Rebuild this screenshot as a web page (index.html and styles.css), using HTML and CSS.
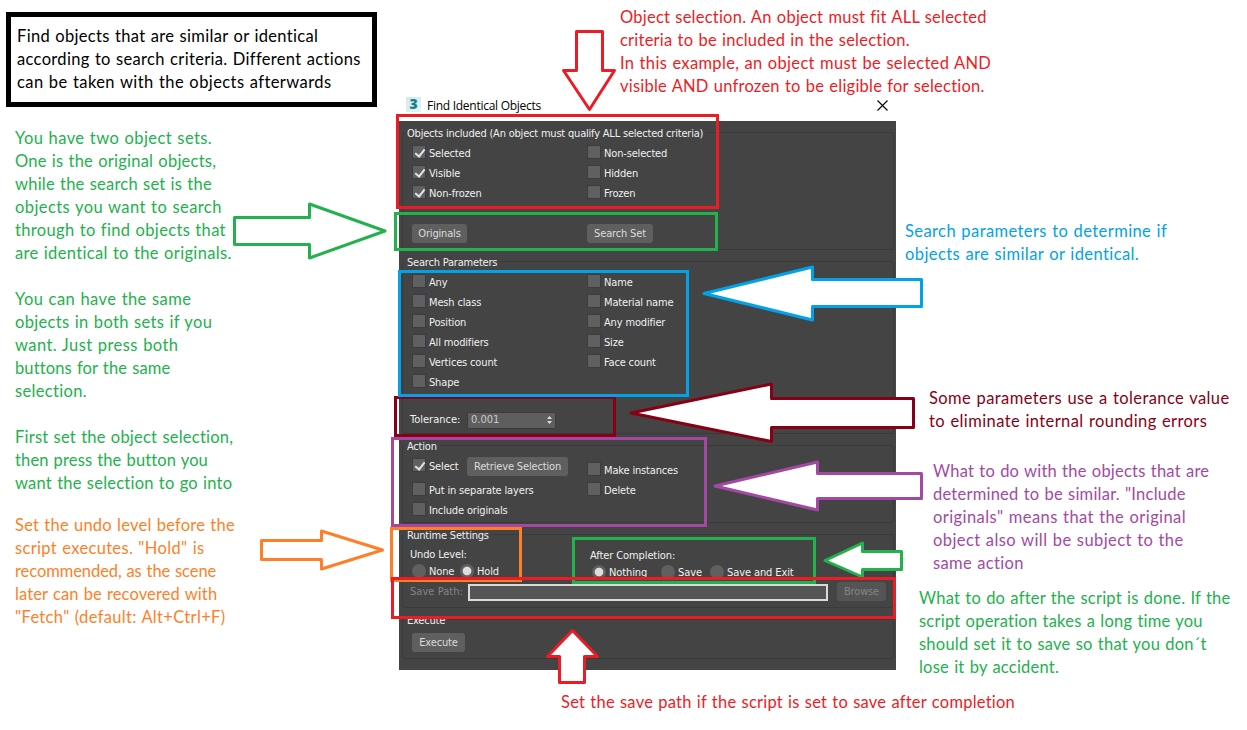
FILE: index.html
```html
<!DOCTYPE html>
<html lang="en">
<head>
<meta charset="utf-8">
<title>Find Identical Objects</title>
<link rel="stylesheet" href="styles.css">
</head>
<body>
<main class="sheet">

  <section class="dialog">
    <header class="titlebar">
      <span class="app-icon">3</span>
      <span class="caption">Find Identical Objects</span>
      <svg class="close" width="11" height="11" viewBox="0 0 11 11"><path d="M.5 .5 10.5 10.5M10.5 .5 .5 10.5"/></svg>
    </header>
    <div class="client">

      <div class="group g-objects">
        <div class="legend">Objects included (An object must qualify ALL selected criteria)</div>
        <div class="cols">
          <div class="col">
            <div class="opt"><i class="box on"></i>Selected</div>
            <div class="opt"><i class="box on"></i>Visible</div>
            <div class="opt"><i class="box on"></i>Non-frozen</div>
          </div>
          <div class="col">
            <div class="opt"><i class="box"></i>Non-selected</div>
            <div class="opt"><i class="box"></i>Hidden</div>
            <div class="opt"><i class="box"></i>Frozen</div>
          </div>
        </div>
        <div class="cols set-buttons">
          <div class="col"><button class="btn w55">Originals</button></div>
          <div class="col"><button class="btn w66">Search Set</button></div>
        </div>
      </div>

      <div class="group g-params">
        <div class="legend">Search Parameters</div>
        <div class="cols">
          <div class="col">
            <div class="opt"><i class="box"></i>Any</div>
            <div class="opt"><i class="box"></i>Mesh class</div>
            <div class="opt"><i class="box"></i>Position</div>
            <div class="opt"><i class="box"></i>All modifiers</div>
            <div class="opt"><i class="box"></i>Vertices count</div>
            <div class="opt"><i class="box"></i>Shape</div>
          </div>
          <div class="col">
            <div class="opt"><i class="box"></i>Name</div>
            <div class="opt"><i class="box"></i>Material name</div>
            <div class="opt"><i class="box"></i>Any modifier</div>
            <div class="opt"><i class="box"></i>Size</div>
            <div class="opt"><i class="box"></i>Face count</div>
          </div>
        </div>
        <div class="tolerance">
          <span class="tol-label">Tolerance:</span>
          <span class="spinner">0.001
            <svg width="7" height="10" viewBox="0 0 7 10"><path d="M1 4 3.5 1 6 4zM1 6 3.5 9 6 6z"/></svg>
          </span>
        </div>
      </div>

      <div class="group g-action">
        <div class="legend">Action</div>
        <div class="cols">
          <div class="col">
            <div class="opt select-row"><i class="box on"></i><span class="select-label">Select</span><button class="btn w101">Retrieve Selection</button></div>
            <div class="opt"><i class="box"></i>Put in separate layers</div>
            <div class="opt"><i class="box"></i>Include originals</div>
          </div>
          <div class="col lowered">
            <div class="opt"><i class="box"></i>Make instances</div>
            <div class="opt"><i class="box"></i>Delete</div>
          </div>
        </div>
      </div>

      <div class="group g-runtime">
        <div class="legend">Runtime Settings</div>
        <div class="cols">
          <div class="undo">
            <div class="head">Undo Level:</div>
            <div class="radios"><span class="opt r-none"><i class="dot"></i>None</span><span class="opt"><i class="dot on"></i>Hold</span></div>
          </div>
          <div class="after">
            <div class="head">After Completion:</div>
            <div class="radios"><span class="opt r-nothing"><i class="dot on"></i>Nothing</span><span class="opt r-save"><i class="dot"></i>Save</span><span class="opt"><i class="dot"></i>Save and Exit</span></div>
          </div>
        </div>
        <div class="path-row">
          <span class="path-label">Save Path:</span>
          <span class="path-field"></span>
          <button class="btn off">Browse</button>
        </div>
      </div>

      <div class="group g-execute">
        <div class="legend">Execute</div>
        <button class="btn w53">Execute</button>
      </div>

    </div>
  </section>

  <!-- frames and arrows drawn over the dialog -->
  <svg class="marks" width="1247" height="730" viewBox="0 0 1247 730">
    <g class="frames">
      <rect class="green" x="395.5" y="213.5" width="321" height="36"/>
      <rect class="red" x="397.5" y="115.5" width="320" height="92"/>
      <rect class="maroon" x="395.5" y="397.5" width="219" height="38"/>
      <rect class="blue" x="399.5" y="271.5" width="288" height="124"/>
      <rect class="purple" x="392.5" y="438.5" width="313" height="87"/>
      <rect class="orange" x="391.5" y="528.5" width="129" height="52"/>
      <rect class="green" x="573.5" y="538.5" width="241" height="44"/>
    </g>
    <g class="arrows">
      <path class="green" d="M234.5 217.5H309.5V204L385 231L309.5 258V244.5H234.5Z"/>
      <path class="red" d="M576.5 31.5H602.5V70.5H614.5L589.5 109.5L563.5 70.5H576.5Z"/>
      <path class="blue" d="M704 293.5L812.5 267V279.5H921.5V306.5H812.5V320Z"/>
      <path class="maroon" d="M631 413L771.5 384V398.5H913.5V427.5H771.5V441.5Z"/>
      <path class="purple" d="M715 486L817.5 462V473.5H921.5V498.5H817.5V510Z"/>
      <path class="orange" d="M261.5 540.5H321.5V531L382.5 550L321.5 569V559.5H261.5Z"/>
      <path class="green" d="M825 560.5L862.5 543V551.5H901.5V569.5H862.5V577Z"/>
      <path class="red" d="M572.5 630.5L597.5 656.5H584.5V682.5H559.5V656.5H547.5Z"/>
    </g>
    <g class="frames">
      <rect class="red" x="392.5" y="578.5" width="502" height="39"/>
    </g>
  </svg>

  <div class="note intro">
    <div>Find objects that are similar or identical</div>
    <div>according to search criteria. Different actions</div>
    <div class="wide">can be taken with the objects afterwards</div>
  </div>

  <div class="note sets green-text">
    <p><span class="wide">You have two object sets.</span><br><span class="snug">One is the original objects,</span><br><span class="snug">while the search set is the</span><br><span class="wide">objects you want to search</span><br><span>through to find objects that</span><br><span>are identical to the originals.</span></p>
    <p><span class="wide">You can have the same</span><br><span>objects in both sets if you</span><br><span class="wide">want. Just press both</span><br><span class="tight">buttons for the same</span><br><span>selection.</span></p>
    <p><span class="snug">First set the object selection,</span><br><span class="tight">then press the button you</span><br><span class="snug">want the selection to go into</span></p>
  </div>

  <div class="note undo-note">
    <div class="snug">Set the undo level before the</div>
    <div>script executes. "Hold" is</div>
    <div class="tightest">recommended, as the scene</div>
    <div class="tight">later can be recovered with</div>
    <div>"Fetch" (default: Alt+Ctrl+F)</div>
  </div>

  <div class="note select-note">
    <div class="snug">Object selection. An object must fit ALL selected</div>
    <div class="snug">criteria to be included in the selection.</div>
    <div>In this example, an object must be selected AND</div>
    <div class="snug">visible AND unfrozen to be eligible for selection.</div>
  </div>

  <div class="note search-note">
    <div class="wide">Search parameters to determine if</div>
    <div class="wide">objects are similar or identical.</div>
  </div>

  <div class="note tolerance-note">
    <div class="wide">Some parameters use a tolerance value</div>
    <div class="wide">to eliminate internal rounding errors</div>
  </div>

  <div class="note action-note">
    <div class="snug">What to do with the objects that are</div>
    <div class="snug">determined to be similar. "Include</div>
    <div class="wide">originals" means that the original</div>
    <div class="wide">object also will be subject to the</div>
    <div>same action</div>
  </div>

  <div class="note done-note green-text">
    <div class="snug">What to do after the script is done. If the</div>
    <div class="snug">script operation takes a long time you</div>
    <div class="snug">should set it to save so that you don´t</div>
    <div class="snug">lose it by accident.</div>
  </div>

  <div class="note path-note"><div class="snug">Set the save path if the script is set to save after completion</div></div>

</main>
</body>
</html>
```
FILE: styles.css
```css
* { box-sizing: border-box; }
body { margin: 0; background: #fff; }
.sheet { position: relative; width: 1247px; height: 730px; overflow: hidden; background: #fff; }

/* dialog window */
.dialog {
  position: absolute; left: 399px; top: 89px; width: 497px;
  font: 11px/14px "DejaVu Sans Condensed", "DejaVu Sans", sans-serif;
  letter-spacing: -0.16px; color: #f0f0f0;
}
.titlebar { display: flex; align-items: center; height: 32px; padding: 0 8px 0 7px; color: #000; }
.app-icon {
  width: 15px; height: 15px; margin: -1px 6px 0 0; background: linear-gradient(135deg, #d0eaee, #e6f3f2);
  color: #15808c; font: 800 14px/14px "Open Sans", sans-serif; text-align: center; letter-spacing: 0;
}
.caption { flex: 1; padding-top: 1px; font: 12px/16px "Open Sans", sans-serif; letter-spacing: -0.27px; }
.close { fill: none; stroke: #000; stroke-width: 1.1; }
.client { height: 549px; padding: 11px 2px 0 3px; background: #444; }

.group { border: 1px solid #3a3a3a; border-radius: 3px; padding-left: 9px; }
.legend {
  width: max-content; height: 12px; margin: -6px 0 0 -8px; padding: 0 3px;
  line-height: 13px; letter-spacing: -0.2px; background: #444;
}
.g-objects { height: 118px; margin-bottom: 11px; }
.g-params { height: 173px; margin-bottom: 11px; }
.g-action { height: 78px; margin-bottom: 11px; }
.g-runtime { height: 74px; margin-bottom: 11px; }
.g-execute { height: 40px; }

.cols { display: flex; padding-top: 4px; }
.col { width: 175px; }
.opt { display: flex; align-items: center; height: 20px; line-height: 16px; padding-top: 1px; white-space: nowrap; }
.box {
  position: relative; flex: none; width: 14px; height: 14px; margin: -3px 3px 0 0;
  border: 1px solid #3c3c3c; background: #606060;
}
.box.on::after {
  content: ""; position: absolute; left: 4px; top: 1px; width: 4px; height: 8px;
  border: solid #e4e4e4; border-width: 0 2px 2px 0; transform: rotate(38deg);
}
.btn {
  display: block; height: 19px; padding: 1px 0 0; border: 0; border-radius: 3px; background: #5f5f5f;
  font: inherit; line-height: 18px; letter-spacing: -0.16px; color: #dcdcdc; text-align: center; white-space: nowrap;
}
.w53 { width: 53px; margin-top: 7px; }
.w55 { width: 55px; }
.w66 { width: 66px; }
.w101 { width: 101px; }
.set-buttons { padding-top: 21px; }

.tolerance { display: flex; align-items: center; height: 16px; margin: 20px 0 0 -2px; }
.tol-label { width: 57px; margin-top: -1px; letter-spacing: 0; }
.spinner {
  display: flex; align-items: center; justify-content: space-between; width: 89px; height: 17px;
  padding: 0 2px 0 3px; border: 1px solid #3c3c3c; background: #5e5e5e; color: #ccc; letter-spacing: 0;
}
.spinner svg { fill: #ddd; }

.select-row { margin-bottom: 4px; }
.select-label { width: 38px; }
.lowered { padding-top: 4px; }

.head { height: 16px; padding-top: 1px; line-height: 17px; }
.radios { display: flex; }
.g-runtime .cols { height: 41px; }
.undo { width: 180px; margin-left: -2px; }
.after { padding-top: 1px; letter-spacing: -0.1px; }
.r-none { width: 48px; }
.r-nothing { width: 69px; }
.r-save { width: 49px; }
.undo .radios { margin-left: 2px; }
.after .radios { margin-left: 2px; }
.dot { flex: none; width: 14px; height: 14px; margin: -1px 3px 0 0; border-radius: 50%; background: #606060; }
.dot.on { background: radial-gradient(circle, #dedede 0 3.8px, #606060 4.8px); }
.path-row { display: flex; align-items: center; height: 19px; margin-left: -2px; }
.path-label { width: 58px; color: #858585; letter-spacing: 0.05px; }
.path-field {
  width: 360px; height: 17px; margin: 1px 9px 0 0; border: 2px solid #dadada; background: #555;
}
.btn.off { width: 49px; background: #545454; color: #858585; }

/* frames and arrows */
.marks { position: absolute; left: 0; top: 0; }
.frames { fill: none; stroke-width: 3; shape-rendering: crispEdges; }
.arrows { fill: #fff; stroke-width: 3; stroke-linejoin: round; }
.red { stroke: #ed1c24; }
.green { stroke: #22b14c; }
.blue { stroke: #00a2e8; }
.maroon { stroke: #880015; }
.purple { stroke: #a349a4; }
.orange { stroke: #ff7f27; }

/* annotation text */
.note {
  position: absolute; font: 16.5px/23px Lato, sans-serif; letter-spacing: 0.33px; word-spacing: 0.7px;
  white-space: nowrap;
}
.note p { margin: 0 0 23px; }
.wide { letter-spacing: 0.41px; }
.snug { letter-spacing: 0.23px; }
.tight { letter-spacing: 0.13px; }
.tightest { letter-spacing: -0.07px; }
.intro { left: 6px; top: 12px; width: 371px; height: 95px; padding: 8px 6px; border: 5px solid #000; color: #000; }
.sets { left: 15px; top: 127px; }
.green-text { color: #22b14c; }
.undo-note { left: 15px; top: 514px; color: #ff7f27; }
.select-note { left: 620px; top: 6px; color: #ed1c24; }
.search-note { left: 905px; top: 220px; color: #00a2e8; }
.tolerance-note { left: 929px; top: 387px; color: #880015; }
.action-note { left: 933px; top: 460px; color: #a349a4; }
.done-note { left: 919px; top: 587px; }
.path-note { left: 561px; top: 691px; color: #ed1c24; }
```
